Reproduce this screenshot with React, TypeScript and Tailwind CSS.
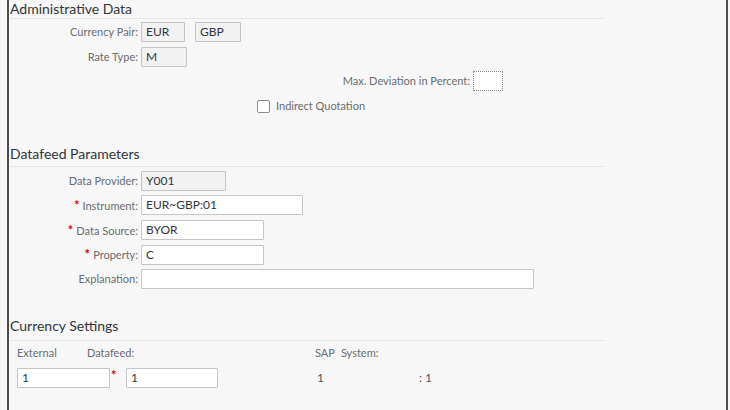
import React from "react";

const labelCls = "w-[128px] shrink-0 text-right text-[11px] leading-[20px] text-[#6a6d70] whitespace-nowrap";
const valueCls = "h-[20px] px-[4px] text-[12px] leading-[18px] text-[#32363a] border border-[#c3c5c7] rounded-[1px]";

function Title({ text, className }: { text: string; className: string }) {
  return (
    <div className={"w-[594px] border-b border-[#e5e5e5] text-[14px] leading-[16px] text-[#32363a] " + className}>
      {text}
    </div>
  );
}

function Field({
  label,
  value,
  width,
  readOnly,
  required,
}: {
  label: string;
  value: string;
  width: string;
  readOnly?: boolean;
  required?: boolean;
}) {
  return (
    <div className="flex h-[20px] items-center">
      <div className={labelCls}>
        {required && <span className="mr-[3px] text-[13px] font-bold text-[#d00]">*</span>}
        {label}
      </div>
      <div className={`ml-[3px] ${width} ${valueCls} ${readOnly ? "bg-[#f2f2f2]" : "bg-white"}`}>{value}</div>
    </div>
  );
}

export default function App() {
  return (
    <div className="h-[410px] w-[730px] overflow-hidden bg-[#f7f7f7] font-['Lato',sans-serif]">
      <div className="ml-[7px] h-full w-[721px] border-x-2 border-[#4d4d4d] pl-[1px]">
        {/* Administrative Data */}
        <Title text="Administrative Data" className="pt-[1px] pb-[1px]" />
        <div className="mt-[3px] flex flex-col gap-[4.7px]">
          <div className="flex h-[20px] items-center">
            <div className={labelCls}>Currency Pair:</div>
            <div className={`ml-[3px] w-[44px] bg-[#f2f2f2] ${valueCls}`}>EUR</div>
            <div className={`ml-[10px] w-[46px] bg-[#f2f2f2] ${valueCls}`}>GBP</div>
          </div>
          <Field label="Rate Type:" value="M" width="w-[46px]" readOnly />
          <div className="flex h-[20px] items-center">
            <div className="w-[460px] shrink-0 text-right text-[11px] text-[#6a6d70]">Max. Deviation in Percent:</div>
            <div className="ml-[3px] h-[20px] w-[30px] border border-dotted border-[#8a8a8a] bg-white" />
          </div>
          <div className="flex h-[20px] items-center pl-[247px]">
            <div className="h-[13px] w-[13px] rounded-[2px] border border-[#8c8c8c] bg-white" />
            <span className="ml-[6px] text-[11px] text-[#6a6d70]">Indirect Quotation</span>
          </div>
        </div>

        {/* Datafeed Parameters */}
        <Title text="Datafeed Parameters" className="mt-[30px] pb-[4px]" />
        <div className="mt-[3.7px] flex flex-col gap-[4.65px]">
          <Field label="Data Provider:" value="Y001" width="w-[85px]" readOnly />
          <Field label="Instrument:" value="EUR~GBP:01" width="w-[162px]" required />
          <Field label="Data Source:" value="BYOR" width="w-[123px]" required />
          <Field label="Property:" value="C" width="w-[123px]" required />
          <Field label="Explanation:" value="" width="w-[393px]" />
        </div>

        {/* Currency Settings */}
        <Title text="Currency Settings" className="mt-[29px] pb-[5.5px]" />
        <div className="mt-[2px] flex h-[20px] items-center text-[11px] text-[#6a6d70]">
          <span className="ml-[7px] w-[70px] shrink-0">External</span>
          <span className="w-[228px] shrink-0">Datafeed:</span>
          <span className="mr-[6px] shrink-0">SAP</span>
          <span className="shrink-0">System:</span>
        </div>
        <div className="mt-[4.7px] flex h-[20px] items-center text-[12px] text-[#555]">
          <div className={`ml-[7px] w-[93px] shrink-0 bg-white ${valueCls}`}>1</div>
          <span className="ml-[1px] w-[15px] shrink-0 self-start text-[13px] font-bold leading-[14px] text-[#d00]">*</span>
          <div className={`w-[92px] shrink-0 bg-white ${valueCls}`}>1</div>
          <span className="ml-[99px] w-[102px] shrink-0">1</span>
          <span>: 1</span>
        </div>
      </div>
    </div>
  );
}
